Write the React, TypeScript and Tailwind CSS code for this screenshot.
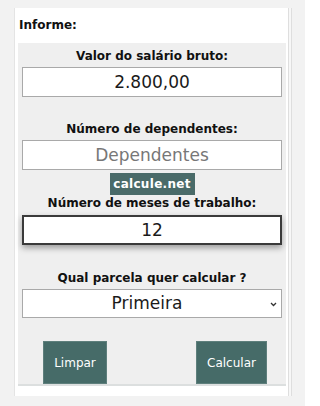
export default function App() {
  const font = { fontFamily: '"DejaVu Sans", Verdana, sans-serif' };
  return (
    <div className="w-[305px] h-[406px] bg-[#f2f2f2] pt-[8px] overflow-hidden" style={font}>
      <div className="flex ml-[14px]">
        {/* card */}
        <div className="w-[274px] h-[388px] bg-white border-l border-[#e4e4e4] pl-[3px] pr-[2px] flex flex-col">
          <div className="h-[35px] pt-[8px] pl-[1px] text-[12px] font-bold text-[#111]">Informe:</div>
          <div className="bg-[#efefef] border-b-2 border-[#dcdfdf] h-[343px] px-[4px] flex flex-col">
            <label className="mt-[6px] text-center text-[12px] font-bold text-[#111] leading-[15px]">
              Valor do salário bruto:
            </label>
            <input
              defaultValue="2.800,00"
              className="mt-[3px] h-[30px] w-full bg-white border border-[#a9a9a9] text-center text-[17px] text-[#1a1a1a] outline-none"
              style={font}
            />
            <label className="mt-[25px] text-center text-[12px] font-bold text-[#111] leading-[15px]">
              Número de dependentes:
            </label>
            <input
              placeholder="Dependentes"
              className="mt-[3px] h-[30px] w-full bg-white border border-[#a9a9a9] text-center text-[17px] text-[#1a1a1a] placeholder:text-[#777] outline-none"
              style={font}
            />
            <div className="mt-[3px] self-center bg-[#4a6b69] text-white text-[12px] font-bold h-[22px] w-[85px] flex items-center justify-center tracking-[0.3px]">
              calcule.net
            </div>
            <label className="mt-[1px] text-center text-[12px] font-bold text-[#111] leading-[15px]">
              Número de meses de trabalho:
            </label>
            <input
              defaultValue="12"
              className="mt-[4px] h-[30px] w-full bg-white border-2 border-[#3a3a3a] text-center text-[17px] text-[#1a1a1a] outline-none shadow-[0_3px_6px_rgba(0,0,0,0.35)]"
              style={font}
            />
            <label className="mt-[26px] text-center text-[12px] font-bold text-[#111] leading-[15px]">
              Qual parcela quer calcular ?
            </label>
            <div className="relative mt-[3px] h-[29px] w-full bg-white border border-[#a9a9a9] flex items-center justify-center pr-[10px]">
              <span className="text-[17px] text-[#1a1a1a]">Primeira</span>
              <svg
                className="absolute right-[4px] top-[12px]"
                width="7"
                height="5"
                viewBox="0 0 7 5"
                fill="none"
                stroke="#333"
                strokeWidth="1.3"
              >
                <path d="M1 1l2.5 2.5L6 1" />
              </svg>
            </div>
            <div className="mt-[23px] flex justify-between pl-[21px] pr-[15px]">
              <button className="w-[64px] h-[43px] bg-[#466b68] border border-[#5e7f7c] text-white text-[12px]">
                Limpar
              </button>
              <button className="w-[71px] h-[43px] bg-[#466b68] border border-[#5e7f7c] text-white text-[12px]">
                Calcular
              </button>
            </div>
          </div>
        </div>
        {/* right double line */}
        <div className="w-[4px] h-[388px] border-l border-r border-[#dedede] bg-[#f7f7f7]" />
      </div>
    </div>
  );
}
